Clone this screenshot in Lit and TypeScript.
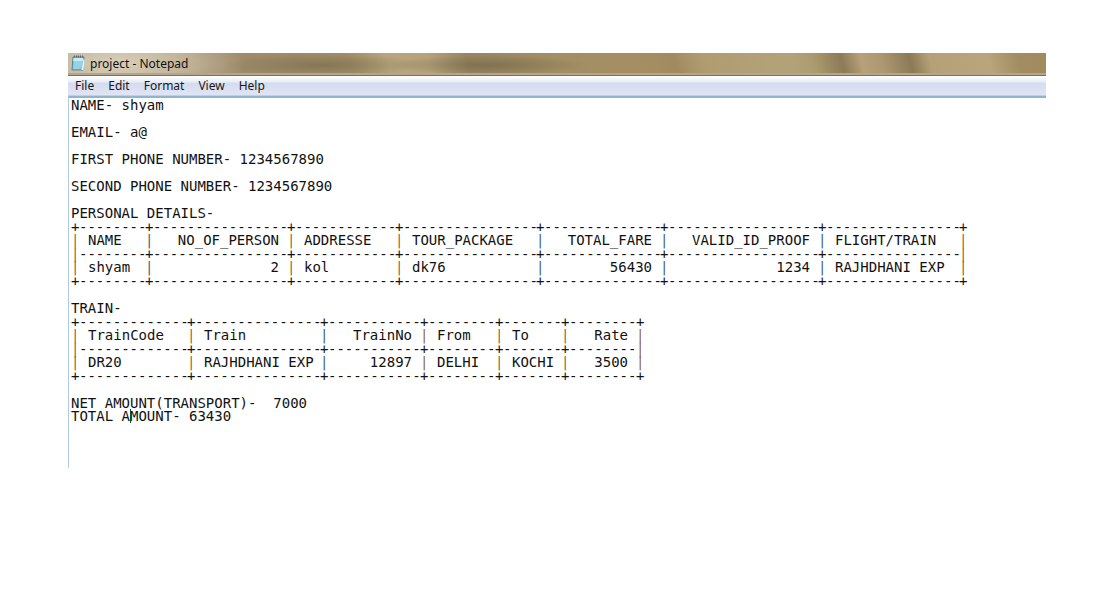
import { LitElement, html, css } from "lit";
import { customElement } from "lit/decorators.js";
import { classMap } from "lit/directives/class-map.js";

interface Column {
  title: string;
  value: string;
  width: number;
  dashes: number;
  numeric?: boolean;
  cool?: boolean;
}

const SEPARATOR_WIDTH = 8;

const personal: Column[] = [
  { title: "NAME", value: "shyam", width: 66, dashes: 8, cool: true },
  { title: "NO_OF_PERSON", value: "2", width: 134, dashes: 16, numeric: true },
  { title: "ADDRESSE", value: "kol", width: 100, dashes: 12 },
  { title: "TOUR_PACKAGE", value: "dk76", width: 133, dashes: 16, cool: true },
  { title: "TOTAL_FARE", value: "56430", width: 116, dashes: 14, numeric: true, cool: true },
  { title: "VALID_ID_PROOF", value: "1234", width: 150, dashes: 18, numeric: true, cool: true },
  { title: "FLIGHT/TRAIN", value: "RAJHDHANI EXP", width: 133, dashes: 16 },
];

const train: Column[] = [
  { title: "TrainCode", value: "DR20", width: 108, dashes: 13 },
  { title: "Train", value: "RAJHDHANI EXP", width: 125, dashes: 15, cool: true },
  { title: "TrainNo", value: "12897", width: 92, dashes: 11, numeric: true },
  { title: "From", value: "DELHI", width: 67, dashes: 8 },
  { title: "To", value: "KOCHI", width: 58, dashes: 7 },
  { title: "Rate", value: "3500", width: 67, dashes: 8, numeric: true },
];

@customElement("app-root")
export class AppRoot extends LitElement {
  static styles = css`
    :host {
      display: block;
      box-sizing: border-box;
      min-height: 100vh;
      padding: 53px 64px 0 68px;
      background: #fff;
      color: #111;
    }
    .titlebar {
      display: flex;
      align-items: center;
      gap: 5px;
      height: 20px;
      padding: 0 3px;
      border-bottom: 2px solid #b5a58c;
      box-shadow: 0 1px 0 #77716a;
      margin-bottom: 1px;
      font: 12px/20px "Noto Sans", sans-serif;
      background:
        radial-gradient(ellipse 100px 12px at 26% 60%, #6f614788, transparent),
        radial-gradient(ellipse 100px 10px at 43% 60%, #6c5e4288, transparent),
        radial-gradient(ellipse 130px 40px at 5% 50%, #d8cfbc, #c5b89ecc 60%, transparent),
        linear-gradient(75deg, #b7a583 0%, #9c8968 14%, #a18c68 24%, #a39067 29%,
          #b9a67f 33%, #b6a27b 37%, #988560 41%, #a38f65 50%, #a58d61 60%,
          #a28a60 62%, #b19c71 65%, #b3a279 74%, #ad9b70 76%, #8d7a57 79%,
          #b7a07a 81%, #ad9872 83%, #8c7a56 86%, #b5a078 88%, #b9a47b 94%,
          #a28c61 97%, #a28a5d 100%);
    }
    .title {
      margin: 0;
      padding-top: 2px;
      font: inherit;
      color: #111;
    }
    .app-icon {
      width: 14px;
      height: 16px;
      flex: none;
    }
    .menu {
      display: flex;
      gap: 14px;
      height: 19px;
      padding: 0 7px;
      border-bottom: 1px solid #cfc9d8;
      background: linear-gradient(#fff 0, #e8eef6 6px, #d5dbee 7px, #dfe4f5 18px);
    }
    .menu button {
      padding: 0;
      border: 0;
      background: none;
      color: #181818;
      font: 12px/20px "Noto Sans", sans-serif;
    }
    .page {
      border-top: 2px solid #92b4cb;
      border-left: 1px solid #b0cce0;
      padding: 1px 2px 45px;
      font: 14px/13px "DejaVu Sans Mono", monospace;
      white-space: pre;
    }
    .line {
      margin: 0 0 14px;
    }
    .heading {
      margin: 0;
      font: inherit;
    }
    .last {
      margin: 0;
    }
    .grid {
      table-layout: fixed;
      border-collapse: collapse;
      margin-bottom: 14px;
    }
    .grid th,
    .grid td {
      height: 13px;
      padding: 0;
      font-weight: normal;
      text-align: left;
    }
    .grid .rule td {
      height: 14px;
      line-height: 14px;
    }
    .grid .cell {
      padding: 0 8px 0 9px;
    }
    .grid .numeric {
      padding: 0 8px;
      text-align: right;
    }
    .grid .bar {
      color: #8f6a42;
    }
    .grid .cool {
      color: #44647e;
    }
    .caret {
      position: relative;
    }
    .caret::after {
      content: "";
      position: absolute;
      left: 0;
      top: 1px;
      width: 1px;
      height: 14px;
      background: #174d25;
    }
  `;

  private separator(mark: string, cool = false) {
    return html`<td class=${classMap({ bar: mark === "|", cool: mark === "|" && cool })}>${mark}</td>`;
  }

  private rule(columns: Column[], inner = false) {
    return html`<tr class="rule">${this.separator(inner ? "|" : "+")}${columns.map(
      (c, i) => html`<td>${"-".repeat(c.dashes)}</td>${this.separator(
        inner && i === columns.length - 1 ? "|" : "+")}`)}</tr>`;
  }

  private table(columns: Column[], label: string) {
    const cell = (c: Column) => classMap({ cell: true, numeric: !!c.numeric });
    const total = columns.reduce((sum, c) => sum + c.width + SEPARATOR_WIDTH, SEPARATOR_WIDTH);
    return html`<table class="grid" aria-label=${label} style="width:${total}px"><colgroup><col style="width:${SEPARATOR_WIDTH}px">${columns.map(
      (c) => html`<col style="width:${c.width}px"><col style="width:${SEPARATOR_WIDTH}px">`)}</colgroup><tbody>${this.rule(columns)}<tr>${this.separator("|")}${columns.map(
      (c) => html`<th scope="col" class=${cell(c)}>${c.title}</th>${this.separator("|", c.cool)}`)}</tr>${this.rule(columns, true)}<tr>${this.separator("|")}${columns.map(
      (c) => html`<td class=${cell(c)}>${c.value}</td>${this.separator("|", c.cool)}`)}</tr>${this.rule(columns)}</tbody></table>`;
  }

  render() {
    return html`
      <header class="titlebar">
        <svg class="app-icon" viewBox="0 0 14 16" aria-hidden="true">
          <path d="M2 2h11l-1 13H1z" fill="#83c7dc" stroke="#4f8799" />
          <path d="M2.5 3h9.7l-.2 3H2.3z" fill="#c5edf5" />
          <path d="M3 7h8M3 9h8M2.700 11h8M2.500 13h6" stroke="#a8dfec" />
          <path d="M12.500 4l1 1-1 10h-2z" fill="#e4f3f5" />
          <path d="M3.500 .5v2M5.500 .5v2M7.500 .5v2M9.500 .5v2M11.500 .5v2" stroke="#5b6468" />
        </svg>
        <h1 class="title">project - Notepad</h1>
      </header>
      <nav class="menu" aria-label="Menu">
        ${["File", "Edit", "Format", "View", "Help"].map((m) => html`<button type="button">${m}</button>`)}
      </nav>
      <main class="page"><p class="line">NAME- shyam</p><p class="line">EMAIL- a@</p><p class="line">FIRST PHONE NUMBER- 1234567890</p><p class="line">SECOND PHONE NUMBER- 1234567890</p><h2 class="heading">PERSONAL DETAILS-</h2>${this.table(personal, "Personal details")}<h2 class="heading">TRAIN-</h2>${this.table(train, "Train")}<p class="last">NET AMOUNT(TRANSPORT)-  7000</p><p class="last">TOTAL A<span class="caret"></span>MOUNT- 63430</p></main>
    `;
  }
}
